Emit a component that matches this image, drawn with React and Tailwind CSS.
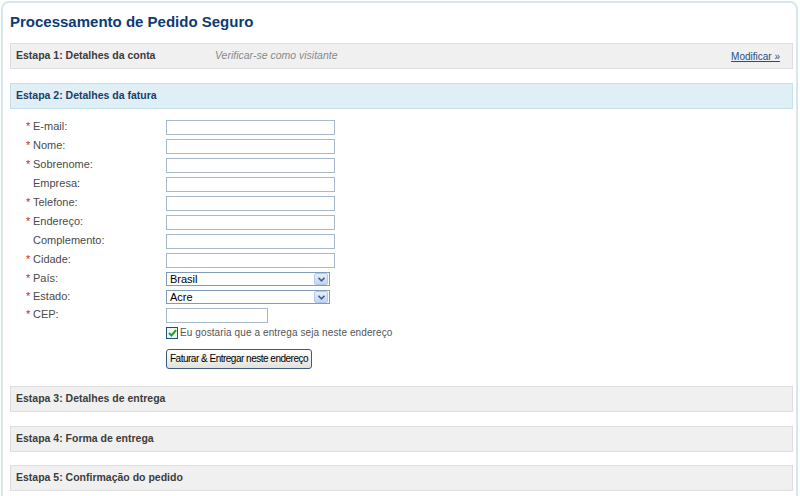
const fields = [
  { label: 'E-mail:', req: true },
  { label: 'Nome:', req: true },
  { label: 'Sobrenome:', req: true },
  { label: 'Empresa:', req: false },
  { label: 'Telefone:', req: true },
  { label: 'Endereço:', req: true },
  { label: 'Complemento:', req: false },
  { label: 'Cidade:', req: true },
];

const Chevron = () => (
  <span className="flex h-[12px] w-[14px] items-center justify-center rounded-[2px] border border-[#b4c8e8] bg-gradient-to-b from-[#e6eefb] to-[#c3d5f3]">
    <svg width="7" height="5" viewBox="0 0 7 5">
      <path d="M0.5 0.8 L3.5 3.8 L6.5 0.8" fill="none" stroke="#4d6185" strokeWidth="1.6" />
    </svg>
  </span>
);

const Label = ({ text, req, h = 'h-[15px]' }) => (
  <div className={`flex ${h} items-start pl-[16px] text-[11px] leading-[12px] text-[#4a4a4a]`}>
    <span className="w-[7px] text-[#d0262a]">{req ? '*' : ''}</span>
    <span>{text}</span>
  </div>
);

const Select = ({ value }) => (
  <div className="flex h-[14px] w-[164px] items-center justify-between border border-[#7f9db9] bg-white pl-[3px] pr-[1px] text-[11px] leading-none text-black">
    <span>{value}</span>
    <Chevron />
  </div>
);

const StepBar = ({ children, active }) => (
  <div
    className={`flex h-[26px] items-center border px-[5px] text-[10.5px] font-bold ${
      active ? 'border-[#c6e1ea] bg-[#dfeff5] text-[#1b3d6b]' : 'border-[#dedede] bg-[#f0f0f0] text-[#3c3c3c]'
    }`}
  >
    {children}
  </div>
);

export default function App() {
  return (
    <div className="h-[496px] w-[800px] overflow-hidden bg-white pl-[1px] pr-[2px] pt-[1px] font-['Liberation_Sans',sans-serif]">
      <div className="h-[520px] rounded-t-[8px] border-2 border-[#d4e7ef] pl-[7px] pr-[3px] pt-[8px]">
        <h1 className="h-[32px] text-[15px] font-bold leading-[22px] text-[#0d3b73]">
          Processamento de Pedido Seguro
        </h1>

        <StepBar>
          <span className="w-[199px]">Estapa 1: Detalhes da conta</span>
          <span className="flex-1 font-normal italic text-[#8a8a8a]">Verificar-se como visitante</span>
          <span className="mr-[7px] text-[10px] font-normal text-[#1f4e86] underline">Modificar »</span>
        </StepBar>

        <div className="mt-[14px]">
          <StepBar active>Estapa 2: Detalhes da fatura</StepBar>
        </div>

        <div className="mt-[11px] grid grid-cols-[156px_1fr] gap-y-[4px]">
          {fields.map((f) => (
            <div key={f.label} className="contents">
              <Label text={f.label} req={f.req} />
              <input className="block h-[15px] w-[169px] border border-[#a8b8cc] bg-white" />
            </div>
          ))}
          <Label text="País:" req h="h-[14px]" />
          <Select value="Brasil" />
          <Label text="Estado:" req h="h-[14px]" />
          <Select value="Acre" />
          <Label text="CEP:" req />
          <input className="block h-[15px] w-[102px] border border-[#a8b8cc] bg-white" />
          <div />
          <div className="flex h-[12px] items-center gap-[2px] text-[10px] leading-[12px] tracking-[0.1px] text-[#555]">
            <span className="flex h-[12px] w-[12px] items-center justify-center border border-[#1c5180] bg-[#eef3f0]">
              <svg width="9" height="8" viewBox="0 0 9 8">
                <path d="M1 4 L3.5 6.5 L8 1.2" fill="none" stroke="#21a121" strokeWidth="2" />
              </svg>
            </span>
            <span>Eu gostaria que a entrega seja neste endereço</span>
          </div>
          <div />
          <div className="flex pt-[6px]">
            <button className="block h-[20px] whitespace-nowrap rounded-[3px] border border-[#3c5a80] bg-gradient-to-b from-white to-[#e2e2dc] px-[3px] text-[10px] leading-none tracking-[-0.5px] text-black">
              Faturar &amp; Entregar neste endereço
            </button>
          </div>
        </div>

        <div className="mt-[17px]">
          <StepBar>Estapa 3: Detalhes de entrega</StepBar>
        </div>
        <div className="mt-[14px]">
          <StepBar>Estapa 4: Forma de entrega</StepBar>
        </div>
        <div className="mt-[13px]">
          <StepBar>Estapa 5: Confirmação do pedido</StepBar>
        </div>
      </div>
    </div>
  );
}
